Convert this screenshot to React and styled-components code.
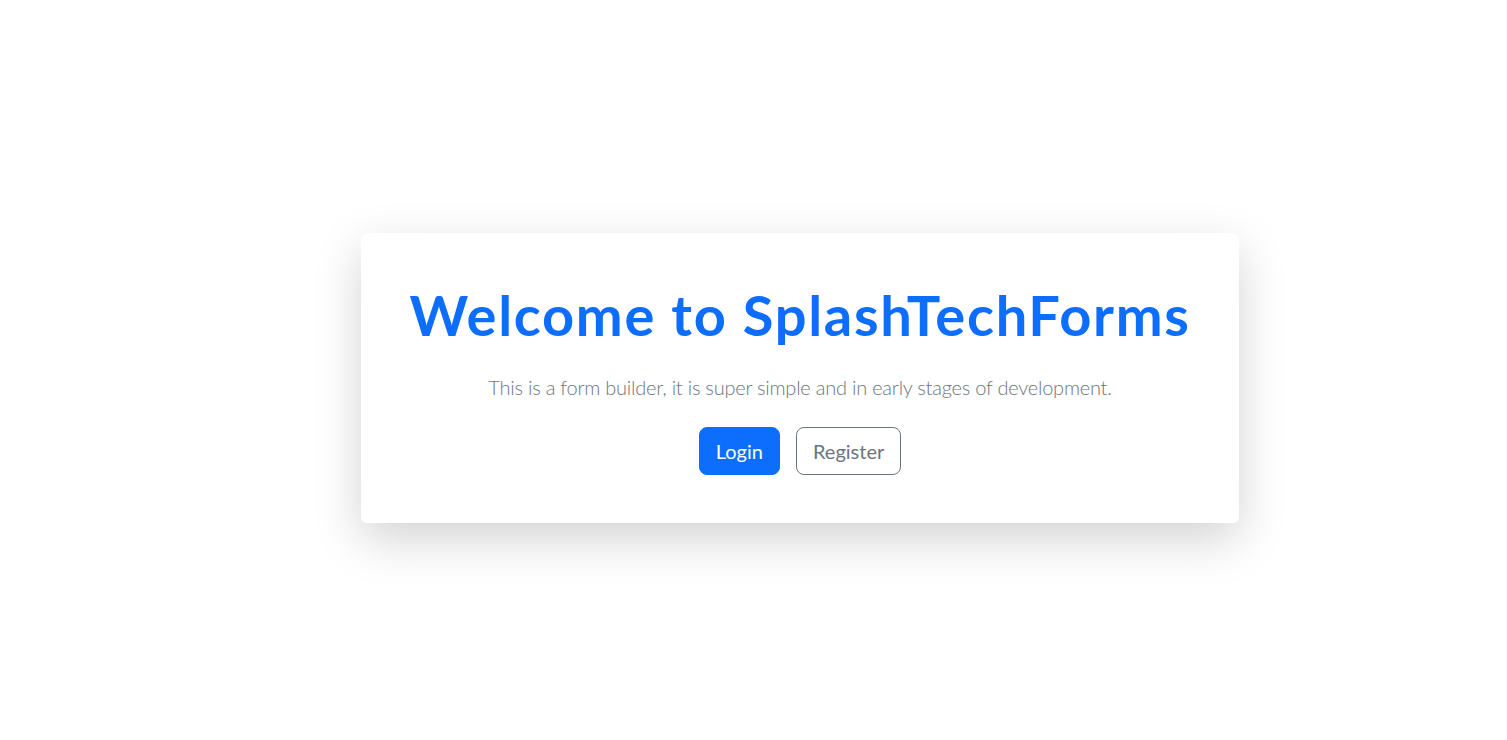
import React from "react";
import styled, { createGlobalStyle } from "styled-components";

const Global = createGlobalStyle`
  html, body { margin: 0; padding: 0; background: #fff; }
  body { font-family: Lato, "Open Sans", sans-serif; color: #212529; }
  * { box-sizing: border-box; }
`;

const Page = styled.main`
  width: 1507px;
  min-height: 740px;
  padding: 233px 0 0 361px;
`;

const Card = styled.section`
  width: 878px;
  background: #fff;
  border-radius: 6px;
  box-shadow: 0 16px 48px rgba(0, 0, 0, 0.175);
  padding: 48px;
  text-align: center;
`;

const Title = styled.h1`
  margin: 0 0 24px;
  font-family: Lato, sans-serif;
  font-size: 56px;
  font-weight: 700;
  line-height: 1.2;
  letter-spacing: 1.7px;
  color: #0d6efd;
  white-space: nowrap;
`;

const Lead = styled.p`
  margin: 0 0 25px;
  font-family: Lato, sans-serif;
  font-size: 20px;
  font-weight: 300;
  line-height: 1.5;
  letter-spacing: -0.23px;
  color: #6c757d;
`;

const Actions = styled.div`
  display: flex;
  justify-content: center;
  gap: 16px;
`;

const Button = styled.button`
  font-family: Lato, sans-serif;
  font-size: 20px;
  line-height: 1.5;
  padding: 8px 16px;
  border-radius: 8px;
  border: 1px solid ${(p) => (p.$primary ? "#0d6efd" : "#6c757d")};
  background: ${(p) => (p.$primary ? "#0d6efd" : "transparent")};
  color: ${(p) => (p.$primary ? "#fff" : "#6c757d")};
  cursor: pointer;
`;

export default function App() {
  return (
    <>
      <Global />
      <Page>
        <Card>
          <Title>Welcome to SplashTechForms</Title>
          <Lead>
            This is a form builder, it is super simple and in early stages of development.
          </Lead>
          <Actions>
            <Button $primary>Login</Button>
            <Button>Register</Button>
          </Actions>
        </Card>
      </Page>
    </>
  );
}
